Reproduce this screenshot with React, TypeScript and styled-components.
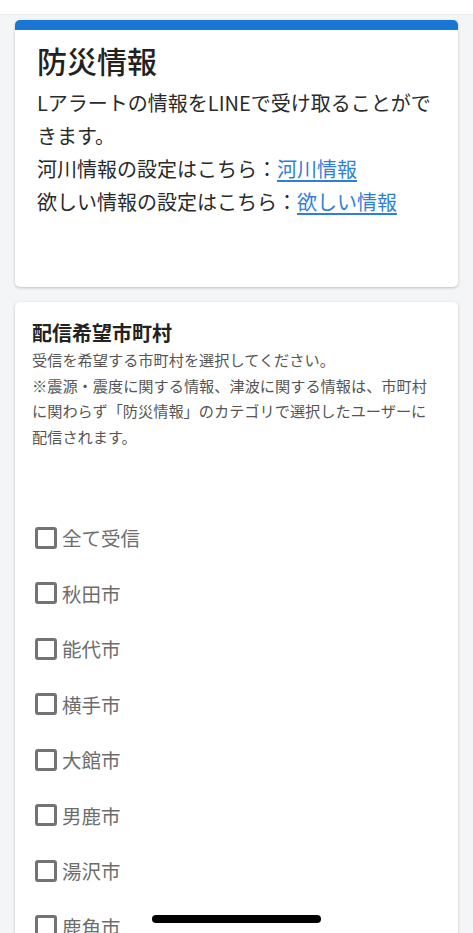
import styled, { createGlobalStyle } from "styled-components";

const GlobalStyle = createGlobalStyle`
  html, body {
    margin: 0;
    padding: 0;
    background: #f4f5f7;
    font-family: "Noto Sans CJK JP", "Noto Sans", sans-serif;
    color: #222;
    text-spacing-trim: space-all;
  }
`;

const BLUE = "#1976d2";

const Page = styled.div`
  min-height: 933px;
  background: #f4f5f7;
`;

const TopBar = styled.div`
  height: 14px;
  background: #ffffff;
  border-bottom: 1px solid #e9eaec;
`;

const Content = styled.div`
  display: flex;
  flex-direction: column;
  gap: 15px;
  padding: 5px 15px 0;
`;

const Card = styled.section<{ $accent?: boolean }>`
  background: #ffffff;
  border-radius: 5px;
  border-top: ${({ $accent }) => ($accent ? `10px solid ${BLUE}` : "none")};
  box-shadow: 0 1px 3px rgba(0, 0, 0, 0.22);
`;

const InfoBody = styled.div`
  padding: 10px 22px 0;
  height: 257px;
  box-sizing: border-box;
`;

const Title = styled.h1`
  margin: 0 0 6px;
  font-size: 30px;
  font-weight: 500;
  line-height: 40px;
  color: #222;
`;

const Paragraph = styled.p`
  margin: 0;
  font-size: 20px;
  line-height: 33px;
  color: #2a2a2a;
`;

const Link = styled.a`
  color: #2f7fd8;
  text-decoration: underline;
  text-underline-offset: 3px;
`;

const AreaBody = styled.div`
  padding: 17px 17px 0;
  height: 660px;
  box-sizing: border-box;
`;

const SectionTitle = styled.h2`
  margin: 0;
  font-size: 20px;
  font-weight: 700;
  line-height: 28px;
  color: #222;
`;

const Note = styled.p`
  margin: 0;
  font-size: 15.2px;
  line-height: 25.7px;
  color: #555;
`;

const Options = styled.ul`
  list-style: none;
  margin: 60px 0 0;
  padding: 0 0 0 3px;
  display: flex;
  flex-direction: column;
`;

const Option = styled.li`
  height: 55.5px;
  display: flex;
  align-items: center;
  gap: 5px;
  font-size: 19.5px;
  color: #6d6d6d;
`;

const Box = styled.span`
  width: 16px;
  height: 16px;
  border: 3px solid #737373;
  border-radius: 3px;
  flex-shrink: 0;
`;

const HomeIndicator = styled.div`
  position: fixed;
  left: 152px;
  bottom: 10px;
  width: 169px;
  height: 8px;
  border-radius: 4px;
  background: #000;
`;

const cities = [
  "全て受信",
  "秋田市",
  "能代市",
  "横手市",
  "大館市",
  "男鹿市",
  "湯沢市",
  "鹿角市",
];

export default function App() {
  return (
    <Page>
      <GlobalStyle />
      <TopBar />
      <Content>
        <Card $accent>
          <InfoBody>
            <Title>防災情報</Title>
            <Paragraph>Lアラートの情報をLINEで受け取ることができます。</Paragraph>
            <Paragraph>
              河川情報の設定はこちら：<Link href="#">河川情報</Link>
            </Paragraph>
            <Paragraph>
              欲しい情報の設定はこちら：<Link href="#">欲しい情報</Link>
            </Paragraph>
          </InfoBody>
        </Card>
        <Card>
          <AreaBody>
            <SectionTitle>配信希望市町村</SectionTitle>
            <Note>受信を希望する市町村を選択してください。</Note>
            <Note>
              ※震源・震度に関する情報、津波に関する情報は、市町村に関わらず「防災情報」のカテゴリで選択したユーザーに配信されます。
            </Note>
            <Options>
              {cities.map((c) => (
                <Option key={c}>
                  <Box />
                  {c}
                </Option>
              ))}
            </Options>
          </AreaBody>
        </Card>
      </Content>
      <HomeIndicator />
    </Page>
  );
}
